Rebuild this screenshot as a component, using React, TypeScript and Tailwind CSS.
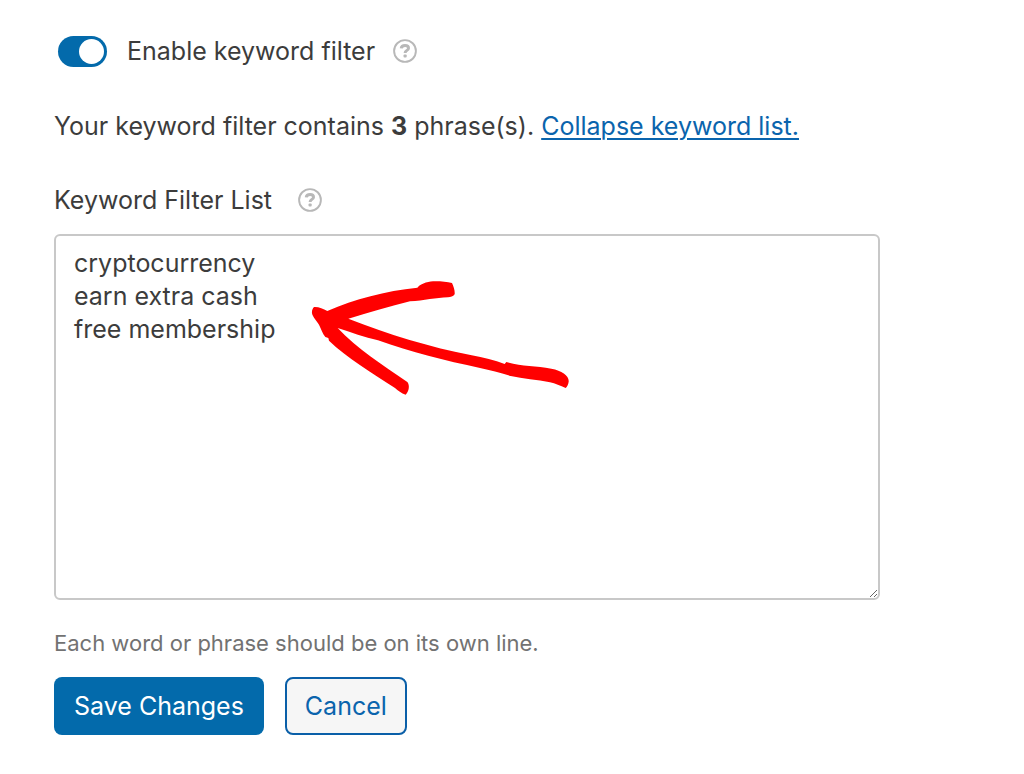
import { useState } from "react";

const HelpIcon = () => (
  <svg viewBox="0 0 24 24" className="h-6 w-6 shrink-0" fill="none" aria-hidden="true">
    <circle cx="12" cy="12" r="10.9" stroke="#b8b8b8" strokeWidth="1.9" />
    <path
      d="M8.2 9.4C8.5 7.3 10 6.5 12 6.5C14.1 6.5 15.5 7.6 15.5 9.2C15.5 11.5 12.1 11.3 12.1 14"
      stroke="#b8b8b8"
      strokeWidth="3"
    />
    <rect x="10.5" y="15.4" width="3.2" height="3.2" rx="1" fill="#b8b8b8" />
  </svg>
);

const Arrow = () => (
  <svg
    viewBox="60 30 786 348"
    className="pointer-events-none absolute left-64 top-[46px] h-[116px] w-[262px]"
    fill="#ff0000"
    aria-hidden="true"
  >
    <path d="M72 111C86 110 99 116 112 123C194 87 286 63 382 53C396 38 418 34 436 34C455 34 472 36 486 39C491 50 495 61 494 73C489 80 482 81 474 82C438 83 402 92 360 94C299 110 238 127 175 146C297 194 420 231 545 256C580 263 614 270 644 282L649 276C692 290 738 287 784 296C816 302 838 318 836 335C835 343 831 350 827 354C811 347 796 341 780 337C741 329 699 326 662 318C630 308 602 301 570 294C465 272 363 247 264 211C224 202 183 187 143 174C200 236 280 286 352 336C360 345 357 365 347 374C334 371 324 361 315 354C243 306 172 265 117 212L115 204L106 201C98 192 94 178 87 164C80 153 67 139 66 130C65 121 68 115 72 111Z" />
  </svg>
);

const App = () => {
  const [enabled, setEnabled] = useState(true);
  const [keywords, setKeywords] = useState(phrases.join("\n"));

  return (
    <form
      className="bg-white pb-10 pl-[54px] pr-36 pt-[33px] font-['Inter','Liberation_Sans',sans-serif] text-[25px] leading-9 text-[#3c3c3c]"
      onSubmit={(e) => e.preventDefault()}
    >
      <div className="flex items-center gap-[18px]">
        <label className="flex cursor-pointer items-center gap-5 pl-1">
          <input
            type="checkbox"
            role="switch"
            checked={enabled}
            onChange={(e) => setEnabled(e.target.checked)}
            className="peer sr-only"
          />
          <span className="flex h-[31px] w-[49px] rounded-full bg-gray-400 p-[3px] peer-checked:justify-end peer-checked:bg-[#036aab]">
            <span className="h-[25px] w-[25px] rounded-full bg-white" />
          </span>
          <span>Enable keyword filter</span>
        </label>
        <HelpIcon />
      </div>

      <p className="mt-[39px]">
        Your keyword filter contains <strong>{phrases.length}</strong> phrase(s).{" "}
        <a href="#keywords" className="text-[#0a64ad] underline decoration-2 underline-offset-3">
          Collapse keyword list.
        </a>
      </p>

      <div className="mt-[38px] flex items-center gap-[26px]">
        <label htmlFor="keywords">Keyword Filter List</label>
        <HelpIcon />
      </div>

      <div className="relative mt-4">
        <textarea
          id="keywords"
          value={keywords}
          onChange={(e) => setKeywords(e.target.value)}
          spellCheck={false}
          className="block h-[366px] w-full resize rounded-md border-2 border-[#c8c8c8] bg-white px-[18px] py-[11px] leading-[33px]"
        />
        <Arrow />
      </div>

      <p className="mt-[27px] text-[22px] leading-8 text-[#727272]">
        Each word or phrase should be on its own line.
      </p>

      <div className="mt-[18px] flex gap-[21px]">
        <button
          type="submit"
          className="h-[58px] rounded-lg bg-[#036aab] px-5 text-white"
        >
          Save Changes
        </button>
        <button
          type="button"
          className="h-[58px] rounded-lg border-2 border-[#0a5fa8] bg-[#f6f6f6] px-[18px] text-[#0a64ad]"
        >
          Cancel
        </button>
      </div>
    </form>
  );
};

export default App;

const phrases = ["cryptocurrency", "earn extra cash", "free membership"];
